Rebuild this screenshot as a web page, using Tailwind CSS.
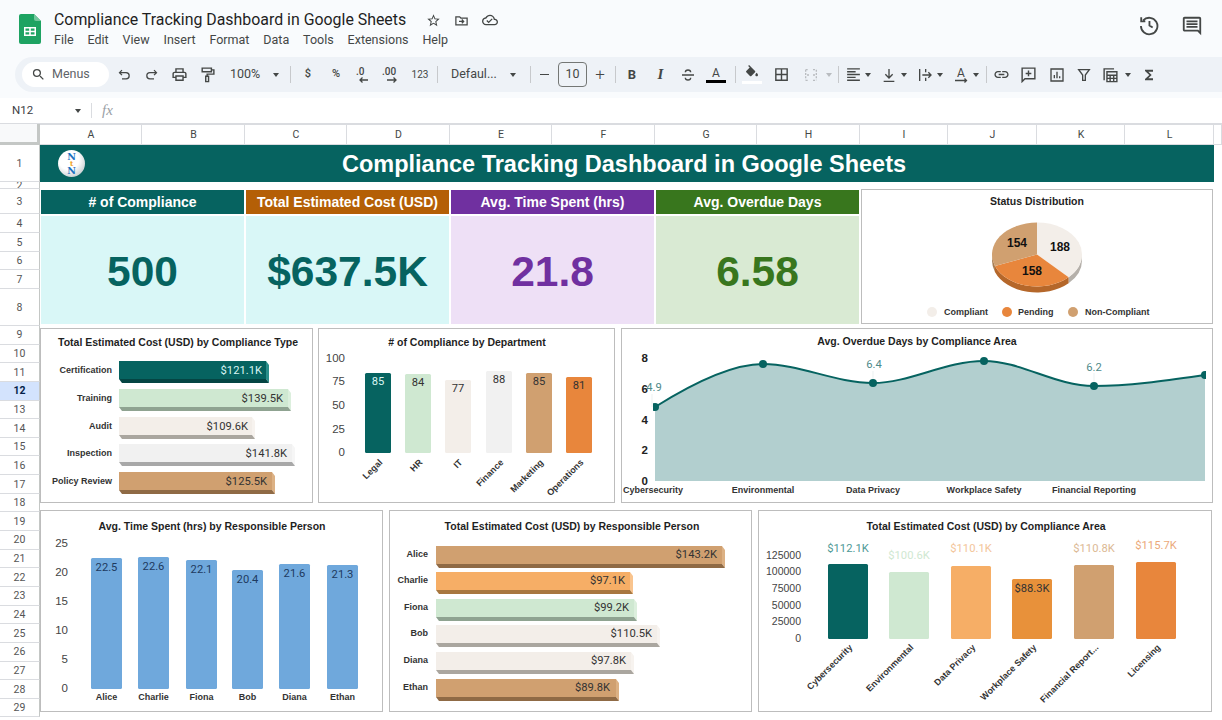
<!DOCTYPE html>
<html lang="en">
<head>
  <meta charset="UTF-8" />
  <meta name="viewport" content="width=device-width, initial-scale=1" />
  <title>Compliance Tracking Dashboard in Google Sheets</title>
  <script src="https://cdn.jsdelivr.net/npm/@tailwindcss/browser@4"></script>
</head>
<body class="bg-white overflow-hidden font-['Liberation_Sans',sans-serif]">
  <div class="w-[1222px] h-[720px] overflow-hidden flex flex-col">

    <!-- Title + menu -->
    <header class="h-[57px] shrink-0 bg-[#f9fbfd] flex items-start font-['Roboto',sans-serif] relative">
      <svg class="w-[22px] h-[30px] ml-[19px] mt-[14px] shrink-0" viewBox="0 0 22 30">
        <path d="M2 0h13l7 7v21a2 2 0 0 1-2 2H2a2 2 0 0 1-2-2V2a2 2 0 0 1 2-2z" fill="#1ea362"/>
        <path d="M15 0l7 7h-5a2 2 0 0 1-2-2z" fill="#74c69d"/>
        <path d="M5 13h12v9H5z M6.5 14.5v2.2h3.7v-2.2z M11.8 14.5v2.2h3.7v-2.2z M6.5 18.3v2.2h3.7v-2.2z M11.8 18.3v2.2h3.7v-2.2z" fill="#fff" fill-rule="evenodd"/>
      </svg>
      <div class="ml-[13px] flex flex-col">
        <div class="flex items-center h-[22px] mt-[9px]">
          <span class="text-[15.9px] leading-none text-[#1f1f1f] w-[372px] whitespace-nowrap">Compliance Tracking Dashboard in Google Sheets</span>
          <svg class="w-[15px] h-[15px] fill-[#444746]" viewBox="0 0 24 24"><path d="M22 9.24l-7.19-.62L12 2 9.19 8.63 2 9.24l5.46 4.73L5.82 21 12 17.27 18.18 21l-1.63-7.03L22 9.24zM12 15.4l-3.76 2.27 1-4.28-3.32-2.88 4.38-.38L12 6.1l1.71 4.04 4.38.38-3.32 2.88 1 4.28L12 15.4z"/></svg>
          <svg class="w-[15px] h-[15px] ml-[13px] fill-none stroke-[#444746] stroke-2" viewBox="0 0 24 24"><path d="M3 6h6l2 2h10v11H3z M8 13.5h7 M12.5 10.5l3 3-3 3"/></svg>
          <svg class="w-[16px] h-[16px] ml-[13px] fill-[#444746]" viewBox="0 0 24 24"><path d="M19.35 10.04C18.67 6.59 15.64 4 12 4 9.11 4 6.6 5.64 5.35 8.04 2.34 8.36 0 10.91 0 14c0 3.31 2.69 6 6 6h13c2.76 0 5-2.24 5-5 0-2.64-2.05-4.78-4.65-4.96zM19 18H6c-2.21 0-4-1.79-4-4 0-2.05 1.53-3.76 3.56-3.97l1.07-.11.5-.95C8.08 7.14 9.94 6 12 6c2.62 0 4.88 1.86 5.39 4.43l.3 1.5 1.53.11c1.56.1 2.78 1.41 2.78 2.96 0 1.65-1.35 3-3 3zm-9-3.82l-2.09-2.09L6.5 13.5 10 17l6.01-6.01-1.41-1.41z"/></svg>
        </div>
        <nav class="flex gap-[13.9px] text-[12.5px] leading-none text-[#444746] mt-[3px]">
          <span>File</span><span>Edit</span><span>View</span><span>Insert</span><span>Format</span><span>Data</span><span>Tools</span><span>Extensions</span><span>Help</span>
        </nav>
      </div>
      <div class="ml-auto mt-[15px] mr-[19px] flex items-center gap-[21px]">
        <svg class="w-[22px] h-[22px] -mt-[2px] fill-none stroke-[#444746] stroke-2" viewBox="0 0 24 24"><path d="M5.6 7A9 9 0 1 1 3.2 13 M3.5 3.5V8H8 M12.5 7.5v5l3.5 2.2"/></svg>
        <svg class="w-[22px] h-[22px] fill-[#444746]" viewBox="0 0 24 24"><path d="M21.99 4c0-1.1-.89-2-1.99-2H4c-1.1 0-2 .9-2 2v12c0 1.1.9 2 2 2h14l4 4-.01-18zM20 4v13.17L18.83 16H4V4h16zM6 12h12v2H6zm0-3h12v2H6zm0-3h12v2H6z"/></svg>
      </div>
    </header>

    <!-- Toolbar -->
    <div class="h-[41px] shrink-0 bg-[#f9fbfd] pl-[15px]">
      <div class="h-[35px] bg-[#eef2f7] rounded-l-full flex items-center text-[#444746] font-['Roboto',sans-serif] [&>*]:shrink-0">
        <div class="ml-[7px] w-[87px] h-[25px] rounded-full bg-white flex items-center pl-[9px] text-[12.5px] text-[#5f6368]">
          <svg class="w-[15px] h-[15px] fill-[#444746]" viewBox="0 0 24 24"><path d="M15.5 14h-.79l-.28-.27A6.471 6.471 0 0 0 16 9.5 6.5 6.5 0 1 0 9.5 16c1.61 0 3.09-.59 4.23-1.57l.27.28v.79l5 4.99L20.49 19l-4.99-5zm-6 0C7.01 14 5 11.99 5 9.5S7.01 5 9.5 5 14 7.01 14 9.5 11.99 14 9.5 14z"/></svg>
          <span class="ml-[6px]">Menus</span>
        </div>
        <div class="w-[28px] ml-px flex justify-center"><svg class="w-[15px] h-[15px] fill-none stroke-[#444746] stroke-2" viewBox="0 0 24 24"><path d="M8 5L4 9l4 4 M4 9h10.5a5 5 0 0 1 0 10H8"/></svg></div>
        <div class="w-[27px] flex justify-center"><svg class="w-[15px] h-[15px] fill-none stroke-[#444746] stroke-2" viewBox="0 0 24 24"><path d="M16 5l4 4-4 4 M20 9H9.5a5 5 0 0 0 0 10H16"/></svg></div>
        <div class="w-[29px] flex justify-center"><svg class="w-[17px] h-[17px] fill-[#444746]" viewBox="0 0 24 24"><path d="M19 8h-1V3H6v5H5c-1.66 0-3 1.34-3 3v6h4v4h12v-4h4v-6c0-1.66-1.34-3-3-3zM8 5h8v3H8V5zm8 12v2H8v-4h8v2zm2-2v-2H6v2H4v-4c0-.55.45-1 1-1h14c.55 0 1 .45 1 1v4h-2z"/></svg></div>
        <div class="w-[27px] flex justify-center"><svg class="w-[17px] h-[17px] fill-none stroke-[#444746] stroke-2" viewBox="0 0 24 24"><path d="M4.5 3h13v5h-13z M17.5 5.5H21v6h-9.5v3 M9.5 14.5h4V22h-4z"/></svg></div>
        <div class="w-[48px] text-center text-[12.5px]">100%</div>
        <div class="w-[14px] flex justify-center"><i class="border-x-[3.5px] border-t-[4px] border-x-transparent border-t-[#444746]"></i></div>
        <div class="w-[14px] flex justify-center"><i class="block w-px h-[17px] bg-[#c7c9cc]"></i></div>
        <div class="w-[22px] text-center text-[11px] font-medium">$</div>
        <div class="w-[34px] text-center text-[11px] font-medium">%</div>
        <div class="w-[20px] flex justify-center"><svg class="w-[20px] h-[18px]" viewBox="0 0 20 18"><text x="3" y="9" class="text-[10px] font-medium fill-[#444746]">.0</text><path d="M15 14H7 M9.5 11.5L7 14l2.5 2.5" class="fill-none stroke-[#444746] stroke-[1.3]"/></svg></div>
        <div class="w-[38px] flex justify-center"><svg class="w-[22px] h-[18px]" viewBox="0 0 22 18"><text x="1" y="9" class="text-[10px] font-medium fill-[#444746]">.00</text><path d="M6 14h9 M12.5 11.5L15 14l-2.5 2.5" class="fill-none stroke-[#444746] stroke-[1.3]"/></svg></div>
        <div class="w-[18px] text-center text-[10px]">123</div>
        <div class="w-[16px] flex justify-center"><i class="block w-px h-[17px] bg-[#c7c9cc]"></i></div>
        <div class="w-[58px] pl-[6px] text-[12.5px] whitespace-nowrap">Defaul...</div>
        <div class="w-[20px] flex justify-center"><i class="border-x-[3.5px] border-t-[4px] border-x-transparent border-t-[#444746]"></i></div>
        <div class="w-[14px] flex justify-center"><i class="block w-px h-[17px] bg-[#c7c9cc]"></i></div>
        <div class="w-[14px] flex justify-center"><i class="block w-[9px] h-[1.5px] bg-[#444746]"></i></div>
        <div class="ml-[7px] w-[29px] h-[25px] border border-[#747775] rounded-[4px] flex items-center justify-center text-[12.5px]">10</div>
        <div class="w-[26px] flex justify-center text-[17px] leading-none font-light">+</div>
        <div class="w-[4px] flex justify-center"><i class="block w-px h-[17px] bg-[#c7c9cc]"></i></div>
        <div class="w-[30px] text-center text-[13px] font-bold">B</div>
        <div class="w-[27px] text-center text-[15px] font-bold italic font-['Liberation_Serif',serif]">I</div>
        <div class="w-[28px] flex justify-center"><svg class="w-[16px] h-[16px] fill-none stroke-[#444746] stroke-2" viewBox="0 0 24 24"><path d="M3 12h18 M8 8a4 3.5 0 0 1 8 0 M8 16a4 3.5 0 0 0 8 0"/></svg></div>
        <div class="w-[28px] flex flex-col items-center"><span class="text-[12px] leading-[13px]">A</span><i class="block w-[20px] h-[3px] bg-black"></i></div>
        <div class="w-[10px] flex justify-center"><i class="block w-px h-[17px] bg-[#c7c9cc]"></i></div>
        <div class="w-[24px] flex flex-col items-center">
          <svg class="w-[16px] h-[16px] fill-[#444746]" viewBox="0 0 24 24"><path d="M16.56 8.94L7.62 0 6.21 1.41l2.38 2.38-5.15 5.15c-.59.59-.59 1.54 0 2.12l5.5 5.5c.29.29.68.44 1.06.44s.77-.15 1.06-.44l5.5-5.5c.59-.58.59-1.53 0-2.12zM19 11.5s-2 2.17-2 3.5c0 1.1.9 2 2 2s2-.9 2-2c0-1.33-2-3.5-2-3.5z"/></svg>
          <i class="block w-[20px] h-[3px] bg-white"></i>
        </div>
        <div class="w-[34px] flex justify-center"><svg class="w-[17px] h-[17px] fill-[#444746]" viewBox="0 0 24 24"><path d="M3 3v18h18V3H3zm8 16H5v-6h6v6zm0-8H5V5h6v6zm8 8h-6v-6h6v6zm0-8h-6V5h6v6z"/></svg></div>
        <div class="w-[26px] flex justify-center"><svg class="w-[16px] h-[16px] fill-none stroke-[#b9bcc0] stroke-2" viewBox="0 0 24 24"><path d="M4 4h5 M15 4h5 M4 20h5 M15 20h5 M4 4v16 M20 4v16 M6 12h5 M18 12h-5" stroke-dasharray="3 2"/></svg></div>
        <div class="w-[10px] flex justify-center"><i class="border-x-[3.5px] border-t-[4px] border-x-transparent border-t-[#b9bcc0]"></i></div>
        <div class="w-[8px] flex justify-center"><i class="block w-px h-[17px] bg-[#c7c9cc]"></i></div>
        <div class="w-[22px] flex justify-center"><svg class="w-[17px] h-[17px] fill-[#444746]" viewBox="0 0 24 24"><path d="M15 15H3v2h12v-2zm0-8H3v2h12V7zM3 13h18v-2H3v2zm0 8h18v-2H3v2zM3 3v2h18V3H3z"/></svg></div>
        <div class="w-[8px] flex justify-center"><i class="border-x-[3.5px] border-t-[4px] border-x-transparent border-t-[#444746]"></i></div>
        <div class="ml-[7px] w-[20px] flex justify-center"><svg class="w-[16px] h-[16px] fill-none stroke-[#444746] stroke-2" viewBox="0 0 24 24"><path d="M12 3v13 M6.5 11l5.5 5.5 5.5-5.5 M4 21.5h16"/></svg></div>
        <div class="w-[10px] flex justify-center"><i class="border-x-[3.5px] border-t-[4px] border-x-transparent border-t-[#444746]"></i></div>
        <div class="ml-[6px] w-[20px] flex justify-center"><svg class="w-[16px] h-[16px] fill-none stroke-[#444746] stroke-2" viewBox="0 0 24 24"><path d="M4 3v18 M13 3v5 M13 16v5 M8 12h13 M17 8l4 4-4 4"/></svg></div>
        <div class="w-[10px] flex justify-center"><i class="border-x-[3.5px] border-t-[4px] border-x-transparent border-t-[#444746]"></i></div>
        <div class="ml-[6px] w-[20px] flex justify-center"><svg class="w-[18px] h-[18px]" viewBox="0 0 18 18"><text x="9" y="11" text-anchor="middle" class="text-[12px] fill-[#444746]">A</text><path d="M3 14.5h11.5 M12.5 12.5l2 2-2 2" class="fill-none stroke-[#444746] stroke-[1.3]"/></svg></div>
        <div class="w-[10px] flex justify-center"><i class="border-x-[3.5px] border-t-[4px] border-x-transparent border-t-[#444746]"></i></div>
        <div class="w-[10px] flex justify-center"><i class="block w-px h-[17px] bg-[#c7c9cc]"></i></div>
        <div class="w-[20px] flex justify-center"><svg class="w-[17px] h-[17px] fill-[#444746]" viewBox="0 0 24 24"><path d="M3.9 12c0-1.71 1.39-3.1 3.1-3.1h4V7H7c-2.76 0-5 2.24-5 5s2.24 5 5 5h4v-1.9H7c-1.71 0-3.1-1.39-3.1-3.1zM8 13h8v-2H8v2zm9-6h-4v1.9h4c1.71 0 3.1 1.39 3.1 3.1s-1.39 3.1-3.1 3.1h-4V17h4c2.76 0 5-2.24 5-5s-2.24-5-5-5z"/></svg></div>
        <div class="ml-[7px] w-[20px] flex justify-center"><svg class="w-[17px] h-[17px] fill-none stroke-[#444746] stroke-2" viewBox="0 0 24 24"><path d="M3 3h18v15H7l-4 4z M12 6.5v8 M8 10.5h8"/></svg></div>
        <div class="ml-[9px] w-[20px] flex justify-center"><svg class="w-[16px] h-[16px] fill-none stroke-[#444746] stroke-2" viewBox="0 0 24 24"><path d="M3 3h18v18H3z M8 17v-5 M12 17V7 M16 17v-3"/></svg></div>
        <div class="ml-[7px] w-[20px] flex justify-center"><svg class="w-[16px] h-[16px] fill-none stroke-[#444746] stroke-2" viewBox="0 0 24 24"><path d="M4 4h16l-6 8v8h-4v-8z"/></svg></div>
        <div class="ml-[6px] w-[20px] flex justify-center"><svg class="w-[17px] h-[17px] fill-none stroke-[#444746] stroke-2" viewBox="0 0 24 24"><path d="M3 20V4h14 M7 8h14v14H7z M7 13h14 M7 17.5h14 M11.5 13v9 M16.5 13v9"/></svg></div>
        <div class="ml-[3px] w-[10px] flex justify-center"><i class="border-x-[3.5px] border-t-[4px] border-x-transparent border-t-[#444746]"></i></div>
        <div class="ml-[6px] w-[20px] flex justify-center"><svg class="w-[16px] h-[16px] fill-[#444746]" viewBox="0 0 24 24"><path d="M18 4H6v2l6.5 6L6 18v2h12v-3h-7l5-5-5-5h7z"/></svg></div>
      </div>
    </div>

    <!-- Formula bar -->
    <div class="h-[26px] shrink-0 bg-white flex items-center border-b border-[#dadce0] font-['Roboto',sans-serif] text-[#3c4043]">
      <span class="ml-[12px] w-[63px] text-[11.5px]">N12</span>
      <i class="border-x-[3.5px] border-t-[4px] border-x-transparent border-t-[#444746]"></i>
      <i class="block ml-[10px] w-px h-[15px] bg-[#dadce0]"></i>
      <span class="ml-[10px] text-[15px] italic text-[#9aa0a6] font-['Liberation_Serif',serif]">fx</span>
    </div>

    <!-- Sheet -->
    <div class="flex-1 flex min-h-0">
      <div class="w-[40px] shrink-0">
        <div class="h-[21px] bg-[#f8f9fa] border-r-[3px] border-b-[3px] border-[#c4c7c5]"></div>
        <div id="rowHeads"></div>
      </div>
      <div class="flex-1 min-w-0">
        <div id="colHeads" class="h-[21px] flex text-[10.5px] text-[#444746] font-['Roboto',sans-serif]"></div>

        <div class="relative w-[1174px] h-[37px] pr-[6px] pt-[3px] bg-[#066360] flex items-center justify-center text-white font-bold text-[23.5px]">
          <svg class="absolute left-[18px] top-[5px] w-[27px] h-[27px]" viewBox="0 0 27 27">
            <defs><radialGradient id="logoBg" cx="40%" cy="35%" r="75%"><stop offset="0.5" stop-color="#ffffff"/><stop offset="1" stop-color="#bfc5c9"/></radialGradient></defs>
            <circle cx="13.5" cy="13.5" r="13.5" fill="url(#logoBg)"/>
            <text x="13.5" y="9.8" text-anchor="middle" class="font-['DejaVu_Serif',serif] font-bold text-[9.5px] fill-[#1c6fc0]">N</text>
            <text x="13.5" y="16" text-anchor="middle" class="font-['DejaVu_Serif',serif] font-bold text-[7px] fill-[#f0a020]">t</text>
            <text x="13.5" y="24" text-anchor="middle" class="font-['DejaVu_Serif',serif] font-bold text-[9.5px] fill-[#1c6fc0]">N</text>
          </svg>
          <span>Compliance Tracking Dashboard in Google Sheets</span>
        </div>

        <!-- KPI row -->
        <div class="mt-[7px] h-[135px] flex">
          <div class="ml-px pt-px w-[818px] grid grid-cols-4 gap-x-[2px] grid-rows-[24px_1fr] gap-y-[2px]">
            <div class="bg-[#066360] text-white font-bold text-[14px] flex items-center justify-center">#&nbsp;of Compliance</div>
            <div class="bg-[#b45f06] text-white font-bold text-[14px] flex items-center justify-center whitespace-nowrap">Total Estimated Cost (USD)</div>
            <div class="bg-[#7030a0] text-white font-bold text-[14px] flex items-center justify-center">Avg. Time Spent (hrs)</div>
            <div class="bg-[#38761d] text-white font-bold text-[14px] flex items-center justify-center">Avg. Overdue Days</div>
            <div class="bg-[#d9f7f7] text-[#066360] font-bold text-[42.5px] pt-[3px] flex items-center justify-center">500</div>
            <div class="bg-[#d9f7f7] text-[#066360] font-bold text-[42.5px] pt-[3px] flex items-center justify-center">$637.5K</div>
            <div class="bg-[#eee0f6] text-[#7030a0] font-bold text-[42.5px] pt-[3px] flex items-center justify-center">21.8</div>
            <div class="bg-[#d9ead3] text-[#38761d] font-bold text-[42.5px] pt-[3px] flex items-center justify-center">6.58</div>
          </div>
          <div class="ml-[2px] w-[352px] border border-[#bdbdbd]"><svg id="chartStatus" class="block w-full h-full" viewBox="862 190 350 133"></svg></div>
        </div>

        <!-- Chart rows -->
        <div class="mt-[4px] h-[175px] flex gap-x-[5px]">
          <div class="w-[273px] border border-[#bdbdbd]"><svg id="chartType" class="block w-full h-full" viewBox="41 329 271 173"></svg></div>
          <div class="w-[297px] border border-[#bdbdbd]"><svg id="chartDept" class="block w-full h-full" viewBox="319 329 295 173"></svg></div>
          <div class="ml-px w-[592px] border border-[#bdbdbd]"><svg id="chartOverdue" class="block w-full h-full" viewBox="622 329 590 173"></svg></div>
        </div>
        <div class="mt-[7px] h-[202px] flex gap-x-[6px]">
          <div class="w-[343px] border border-[#bdbdbd]"><svg id="chartTime" class="block w-full h-full" viewBox="41 511 341 200"></svg></div>
          <div class="w-[363px] border border-[#bdbdbd]"><svg id="chartPerson" class="block w-full h-full" viewBox="390 511 361 200"></svg></div>
          <div class="w-[454px] border border-[#bdbdbd]"><svg id="chartArea" class="block w-full h-full" viewBox="759 511 452 200"></svg></div>
        </div>
      </div>
    </div>
  </div>

  <script>
    // Row and column headers
    const rowHeights = [37, 7, 25, 19, 19, 18, 19, 37];
    for (let i = 9; i <= 29; i++) rowHeights.push(18.65);
    document.getElementById('rowHeads').innerHTML = rowHeights.map((h, i) => {
      const active = i + 1 === 12;
      const cls = active
        ? 'bg-[#d3e3fd] text-[#041e49] font-bold'
        : 'bg-white text-[#555555]';
      return `<div style="height:${h}px" class="${cls} pt-px border-b border-[#dadce0] border-r border-r-[#c4c7c5] text-[10.5px] font-['Roboto',sans-serif] flex items-center justify-center overflow-hidden">${i + 1}</div>`;
    }).join('');

    const cols = [['A',102],['B',103],['C',102],['D',103],['E',102],['F',103],['G',102],['H',103],['I',88],['J',89],['K',88],['L',89],['',8]];
    document.getElementById('colHeads').innerHTML = cols.map(([c, w]) =>
      `<div style="width:${w}px" class="shrink-0 pl-px border-r border-t border-b border-[#dadce0] flex items-center justify-center">${c}</div>`
    ).join('');

    // Chart text styles
    const titleCls = 'font-bold text-[10.5px] fill-[#1f1f1f]';
    const catCls = 'font-bold text-[9px] fill-[#333333]';
    const axisCls = 'text-[11.5px] fill-[#444444]';
    const valCls = "font-['Roboto',sans-serif] text-[11.2px]";

    const txt = (x, y, s, cls, anchor = 'middle', fill = '') =>
      `<text x="${x}" y="${y}" text-anchor="${anchor}" dominant-baseline="central" class="${cls}"${fill ? ` fill="${fill}"` : ''}>${s}</text>`;

    const rotated = (x, y, s) =>
      `<text transform="translate(${x} ${y}) rotate(-45)" text-anchor="end" class="font-bold text-[9px] fill-[#333333]">${s}</text>`;

    // Horizontal bar with the fake 3D edge
    function bar3d(x0, x1, y, h, front, side, bottom) {
      const d = 4, e = 3;
      return `<polygon points="${x1 - e},${y} ${x1},${y + d} ${x1},${y + h + d} ${x1 - e},${y + h}" fill="${side}"/>` +
        `<polygon points="${x0},${y + h} ${x1 - e},${y + h} ${x1},${y + h + d} ${x0 + e},${y + h + d}" fill="${bottom}"/>` +
        `<rect x="${x0}" y="${y}" width="${x1 - e - x0}" height="${h}" fill="${front}"/>`;
    }

    const columns = (list, base, w) => list.map(b =>
      `<rect x="${b.x}" y="${b.top}" width="${w}" height="${base - b.top}" rx="1.5" fill="${b.c}"/>`
    ).join('');

    const teal = '#066360', mint = '#cfe8d1', linen = '#f3eee9', grey = '#f1f1f1',
          tan = '#d0a070', peach = '#f6ae66', amber = '#e8913a', orange = '#e8863c';

    // Compliance type
    const typeBars = [
      { n: 'Certification', end: 269, y: 361, v: '$121.1K', vx: 262, f: teal, s: '#2b8f8a', b: '#044543', t: '#d9f5f3' },
      { n: 'Training', end: 291, y: 389, v: '$139.5K', vx: 283, f: mint, s: '#dcefdd', b: '#8fa391', t: '#333333' },
      { n: 'Audit', end: 255, y: 417, v: '$109.6K', vx: 248, f: linen, s: '#f7f3ef', b: '#aaa69f', t: '#333333' },
      { n: 'Inspection', end: 295, y: 444, v: '$141.8K', vx: 287, f: grey, s: '#f6f6f6', b: '#a8a8a8', t: '#333333' },
      { n: 'Policy Review', end: 275, y: 472, v: '$125.5K', vx: 267, f: tan, s: '#dcb184', b: '#8f6a45', t: '#333333' },
    ];
    document.getElementById('chartType').innerHTML =
      txt(178, 342, 'Total Estimated Cost (USD) by Compliance Type', titleCls) +
      typeBars.map(b =>
        bar3d(119, b.end, b.y, 18, b.f, b.s, b.b) +
        txt(b.vx, b.y + 9, b.v, valCls, 'end', b.t) +
        txt(112, b.y + 9, b.n, catCls, 'end')
      ).join('');

    // Department
    const deptBars = [
      { n: 'Legal', x: 365, top: 373, v: 85, c: teal, t: '#d9f5f3' },
      { n: 'HR', x: 405, top: 374, v: 84, c: mint, t: '#333333' },
      { n: 'IT', x: 445, top: 380, v: 77, c: linen, t: '#333333' },
      { n: 'Finance', x: 486, top: 371, v: 88, c: grey, t: '#333333' },
      { n: 'Marketing', x: 526, top: 373, v: 85, c: tan, t: '#333333' },
      { n: 'Operations', x: 566, top: 377, v: 81, c: orange, t: '#333333' },
    ];
    document.getElementById('chartDept').innerHTML =
      txt(467, 342, '# of Compliance by Department', titleCls) +
      [[100, 358], [75, 381], [50, 405], [25, 429], [0, 452]].map(([v, y]) => txt(345, y, v, axisCls, 'end')).join('') +
      columns(deptBars, 453, 26) +
      deptBars.map(b => txt(b.x + 13, b.top + 8, b.v, valCls, 'middle', b.t) + rotated(b.x + 18, 463, b.n)).join('');

    // Overdue days area, first and last dots are cut by the plot edge
    const curve = 'M655 407C690 385 730 364 763 364C800 364 835 383 873 383C910 383 945 361 984 361C1021 361 1055 386 1094 386C1130 386 1170 380 1205 375';
    const dots = [[655, 407], [763, 364], [873, 383], [984, 361], [1094, 386], [1205, 375]];
    document.getElementById('chartOverdue').innerHTML =
      `<defs><clipPath id="plotEdge"><rect x="653" y="350" width="553" height="135"/></clipPath></defs>` +
      txt(917, 341, 'Avg. Overdue Days by Compliance Area', titleCls) +
      `<path d="${curve}V481H655Z" fill="#b2cfcf"/>` +
      `<path d="${curve}" fill="none" stroke="${teal}" stroke-width="2"/>` +
      [[873, 371, 383], [1094, 373, 386], [652, 394, 407]].map(([x, y1, y2]) =>
        `<line x1="${x}" y1="${y1}" x2="${x}" y2="${y2}" stroke="#d5e3e3" stroke-width="0.5"/>`).join('') +
      `<g clip-path="url(#plotEdge)">` + dots.map(([x, y]) => `<circle cx="${x}" cy="${y}" r="4" fill="${teal}"/>`).join('') + `</g>` +
      [[8, 358], [6, 389], [4, 420], [2, 450], [0, 481]].map(([v, y]) => txt(648, y, v, 'font-bold text-[11.5px] fill-[#222222]', 'end')).join('') +
      [['4.9', 654, 387], ['6.4', 874, 364], ['6.2', 1094, 367]].map(([v, x, y]) => txt(x, y, v, valCls, 'middle', '#4f8a8a')).join('') +
      [['Cybersecurity', 653], ['Environmental', 763], ['Data Privacy', 873], ['Workplace Safety', 984], ['Financial Reporting', 1094]]
        .map(([s, x]) => txt(x, 490, s, catCls)).join('');

    // Time spent
    const timeBars = [
      { n: 'Alice', x: 91, top: 558, v: '22.5' }, { n: 'Charlie', x: 138, top: 557, v: '22.6' },
      { n: 'Fiona', x: 186, top: 560, v: '22.1' }, { n: 'Bob', x: 232, top: 570, v: '20.4' },
      { n: 'Diana', x: 279, top: 564, v: '21.6' }, { n: 'Ethan', x: 327, top: 565, v: '21.3' },
    ].map(b => ({ ...b, c: '#6fa8dc' }));
    document.getElementById('chartTime').innerHTML =
      txt(212, 526, 'Avg. Time Spent (hrs) by Responsible Person', titleCls) +
      [[25, 543], [20, 572], [15, 601], [10, 630], [5, 659], [0, 688]].map(([v, y]) => txt(68, y, v, axisCls, 'end')).join('') +
      columns(timeBars, 689, 31) +
      timeBars.map(b => txt(b.x + 15.5, b.top + 9, b.v, valCls, 'middle', '#1e3a5f') + txt(b.x + 15.5, 697, b.n, catCls)).join('');

    // Cost by person
    const personBars = [
      { n: 'Alice', end: 725, y: 546, v: '$143.2K', vx: 717, f: tan, s: '#dcb184', b: '#8f6a45' },
      { n: 'Charlie', end: 633, y: 572, v: '$97.1K', vx: 625, f: peach, s: '#f9c48e', b: '#a8773f' },
      { n: 'Fiona', end: 637, y: 599, v: '$99.2K', vx: 629, f: mint, s: '#dcefdd', b: '#8fa391' },
      { n: 'Bob', end: 660, y: 625, v: '$110.5K', vx: 652, f: linen, s: '#f7f3ef', b: '#aaa69f' },
      { n: 'Diana', end: 634, y: 652, v: '$97.8K', vx: 626, f: linen, s: '#f7f3ef', b: '#aaa69f' },
      { n: 'Ethan', end: 619, y: 679, v: '$89.8K', vx: 610, f: tan, s: '#dcb184', b: '#8f6a45' },
    ];
    document.getElementById('chartPerson').innerHTML =
      txt(572, 526, 'Total Estimated Cost (USD) by Responsible Person', titleCls) +
      personBars.map(b =>
        bar3d(436, b.end, b.y, 18, b.f, b.s, b.b) +
        txt(b.vx, b.y + 8, b.v, valCls, 'end', '#333333') +
        txt(428, b.y + 8, b.n, catCls, 'end')
      ).join('');

    // Cost by area
    const areaBars = [
      { n: 'Cybersecurity', x: 828, top: 564, c: teal, v: '$112.1K', vy: 548, t: '#4f9a96' },
      { n: 'Environmental', x: 889, top: 572, c: mint, v: '$100.6K', vy: 555, t: '#cfe8d1' },
      { n: 'Data Privacy', x: 951, top: 566, c: peach, v: '$110.1K', vy: 548, t: '#f3c59a' },
      { n: 'Workplace Safety', x: 1012, top: 579, c: amber, v: '$88.3K', vy: 588, t: '#333333' },
      { n: 'Financial Report...', x: 1074, top: 565, c: tan, v: '$110.8K', vy: 548, t: '#dcb994' },
      { n: 'Licensing', x: 1136, top: 562, c: orange, v: '$115.7K', vy: 545, t: '#eba97a' },
    ];
    document.getElementById('chartArea').innerHTML =
      txt(986, 526, 'Total Estimated Cost (USD) by Compliance Area', titleCls) +
      [[125000, 555], [100000, 571], [75000, 588], [50000, 605], [25000, 621], [0, 638]].map(([v, y]) => txt(801, y, v, 'text-[10.5px] fill-[#444444]', 'end')).join('') +
      columns(areaBars, 639, 40) +
      areaBars.map(b => txt(b.x + 20, b.vy, b.v, valCls, 'middle', b.t) + rotated(b.x + 25, 648, b.n)).join('');

    // Status pie, tilted, so everything is an ellipse
    const cx = 1037, cy = 254.5, rx = 45, ry = 32, depth = 6;
    const at = deg => [cx + rx * Math.sin(deg * Math.PI / 180), cy - ry * Math.cos(deg * Math.PI / 180)];
    const a1 = 135.4, a2 = 249.1;
    const wedge = (a, b, c) => {
      const [x1, y1] = at(a), [x2, y2] = at(b);
      return `<path d="M${cx} ${cy}L${x1} ${y1}A${rx} ${ry} 0 0 1 ${x2} ${y2}Z" fill="${c}"/>`;
    };
    const rim = (a, b, c) => {
      const [x1, y1] = at(a), [x2, y2] = at(b);
      return `<path d="M${x1} ${y1}A${rx} ${ry} 0 0 1 ${x2} ${y2}V${y2 + depth}A${rx} ${ry} 0 0 0 ${x1} ${y1 + depth}Z" fill="${c}"/>`;
    };
    const legend = [[932, 944, 'Compliant', linen], [1007, 1018, 'Pending', orange], [1073, 1085, 'Non-Compliant', tan]];
    document.getElementById('chartStatus').innerHTML =
      txt(1037, 201, 'Status Distribution', titleCls) +
      rim(90, a1, '#b5b0aa') + rim(a1, a2, '#b5672a') + rim(a2, 270, '#a67c52') +
      wedge(0, a1, linen) + wedge(a1, a2, orange) + wedge(a2, 360, tan) +
      txt(1060, 247, '188', 'font-bold text-[12px] fill-[#111111]') +
      txt(1032, 271, '158', 'font-bold text-[12px] fill-[#111111]') +
      txt(1017, 243, '154', 'font-bold text-[12px] fill-[#111111]') +
      legend.map(([dx, tx, s, c]) => `<circle cx="${dx}" cy="312" r="5" fill="${c}"/>` + txt(tx, 312, s, catCls, 'start')).join('');
  </script>
</body>
</html>
